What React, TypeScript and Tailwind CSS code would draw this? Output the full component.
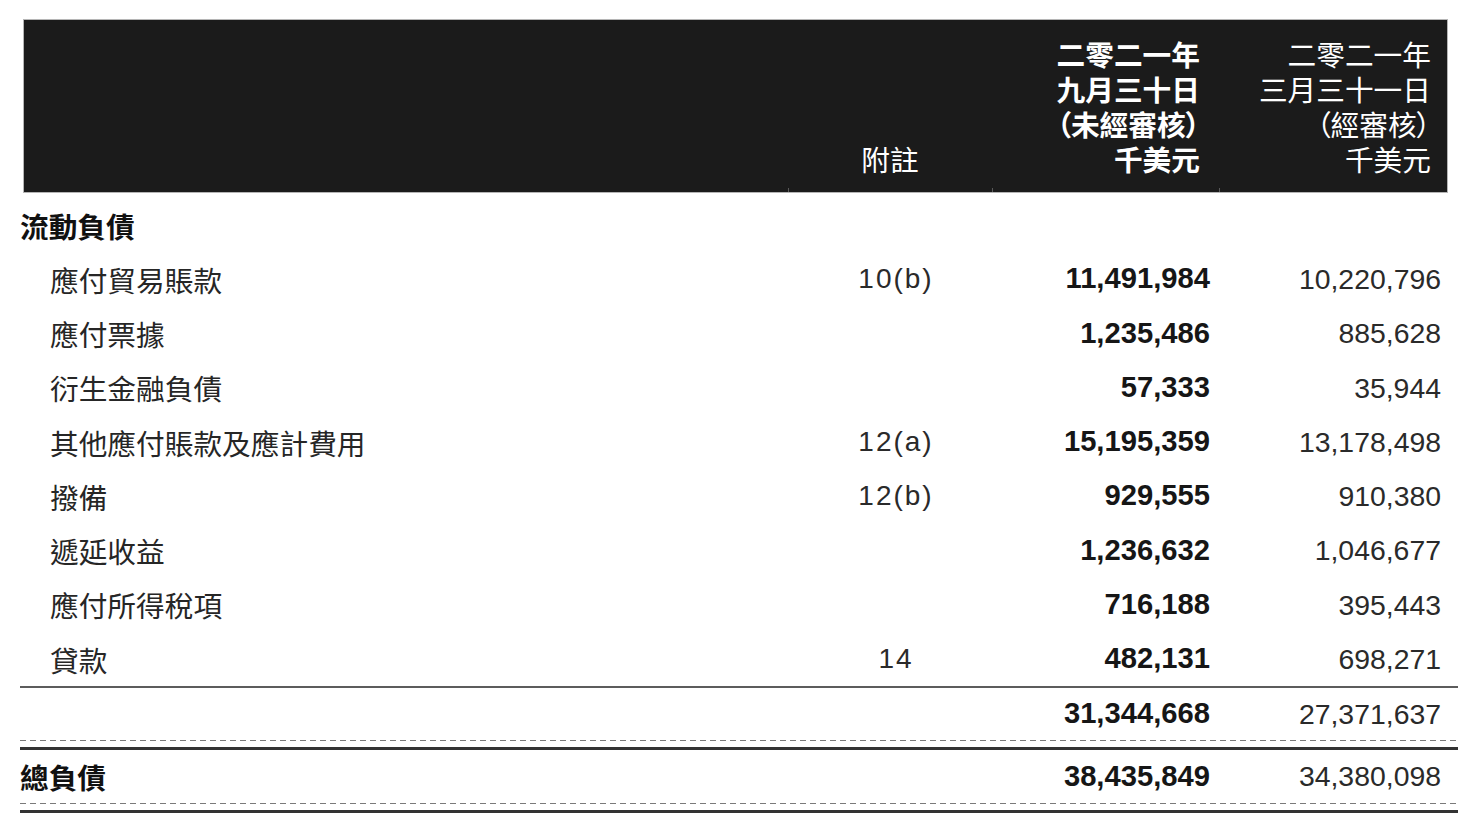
const cjk = "font-['Noto_Sans_CJK_TC','Noto_Sans_CJK_SC',sans-serif]";
const num = "font-['Liberation_Sans','Noto_Sans_CJK_TC',sans-serif]";

type Row = { label: string; note?: string; cur: string; prev: string };

const rows: Row[] = [
  { label: "應付貿易賬款", note: "10(b)", cur: "11,491,984", prev: "10,220,796" },
  { label: "應付票據", cur: "1,235,486", prev: "885,628" },
  { label: "衍生金融負債", cur: "57,333", prev: "35,944" },
  { label: "其他應付賬款及應計費用", note: "12(a)", cur: "15,195,359", prev: "13,178,498" },
  { label: "撥備", note: "12(b)", cur: "929,555", prev: "910,380" },
  { label: "遞延收益", cur: "1,236,632", prev: "1,046,677" },
  { label: "應付所得稅項", cur: "716,188", prev: "395,443" },
  { label: "貸款", note: "14", cur: "482,131", prev: "698,271" },
];

const gridCols = "grid grid-cols-[768px_204px_227px_1fr]";
const curCls = `${num} text-right pr-[9px] font-bold text-[29.2px] text-[#161616]`;
const prevCls = `${num} text-right pr-[17px] text-[28.4px] text-[#2a2a2a]`;

function Dashed() {
  return (
    <div className="h-px w-full bg-[repeating-linear-gradient(to_right,#7a7a7a_0_6px,transparent_6px_10px)]" />
  );
}

function HeaderCell({ lines, bold, pr }: { lines: string[]; bold?: boolean; pr: string }) {
  return (
    <div className="flex flex-col justify-end">
      <div className={`${pr} text-right text-white ${bold ? "font-bold" : "font-normal"} pb-[12px]`}>
        {lines.map((l) => (
          <div key={l} className="h-[35px] leading-[35px]">{l}</div>
        ))}
      </div>
      <div className="h-[4px] border-l border-[#5a5a5a]" />
    </div>
  );
}

export default function App() {
  return (
    <div className="min-h-screen bg-white">
      <div className="w-[1458px] pl-[20px] pt-[19px]">
        <div
          className={`ml-[3px] w-[1425px] h-[174px] bg-[#1b1b1b] border border-[#b5b5b5] grid grid-cols-[764px_204px_227px_1fr] text-[28.7px] ${cjk} [font-feature-settings:'palt']`}
        >
          <div />
          <div className="flex flex-col justify-end">
            <div className="h-[35px] leading-[35px] text-center text-white mb-[12px]">附註</div>
            <div className="h-[4px] border-l border-[#5a5a5a]" />
          </div>
          <HeaderCell lines={["二零二一年", "九月三十日", "（未經審核）", "千美元"]} bold pr="pr-[19px]" />
          <HeaderCell lines={["二零二一年", "三月三十一日", "（經審核）", "千美元"]} pr="pr-[16px]" />
        </div>

        <div className="mt-[5px] text-[28.7px]">
          <div className={`${gridCols} h-[54.25px] items-center`}>
            <div className={`${cjk} font-bold text-[#111]`}>流動負債</div>
          </div>
          {rows.map((r) => (
            <div key={r.label} className={`${gridCols} h-[54.25px] items-center`}>
              <div className={`${cjk} pl-[30px] text-[#262626]`}>{r.label}</div>
              <div className={`${num} text-center pl-[12px] tracking-[2px] text-[28px] text-[#2a2a2a]`}>{r.note ?? ""}</div>
              <div className={curCls}>{r.cur}</div>
              <div className={prevCls}>{r.prev}</div>
            </div>
          ))}

          <div className="h-[2px] bg-[#5c5c5c]" />
          <div className={`${gridCols} h-[52px] items-center`}>
            <div />
            <div />
            <div className={curCls}>31,344,668</div>
            <div className={prevCls}>27,371,637</div>
          </div>
          <Dashed />
          <div className="h-[6px]" />
          <div className="h-[3px] bg-[#333]" />
          <div className={`${gridCols} h-[53px] items-center`}>
            <div className={`${cjk} font-bold text-[#111]`}>總負債</div>
            <div />
            <div className={curCls}>38,435,849</div>
            <div className={prevCls}>34,380,098</div>
          </div>
          <Dashed />
          <div className="h-[6px]" />
          <div className="h-[3px] bg-[#333]" />
        </div>
      </div>
    </div>
  );
}
